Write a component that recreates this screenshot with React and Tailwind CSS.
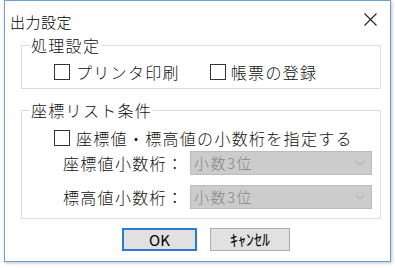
const FONT = { fontFamily: '"Noto Sans CJK JP", "Noto Sans", sans-serif' };

function CheckBox() {
  return <div className="w-[16px] h-[16px] border border-[#333333] bg-white shrink-0" />;
}

function Chevron() {
  return (
    <svg width="10" height="6" viewBox="0 0 10 6" className="shrink-0">
      <path d="M0.5 0.5 L5 5 L9.5 0.5" fill="none" stroke="#a9a9a9" strokeWidth="1" />
    </svg>
  );
}

function DigitSelect() {
  return (
    <div className="w-[182px] h-[24px] bg-[#cccccc] border border-[#bdbdbd] flex items-center justify-between pl-[3px] pr-[6px]">
      <span className="text-[15px] leading-[20px] tracking-[1.5px] font-light text-[#858585]">小数3位</span>
      <Chevron />
    </div>
  );
}

function Group({ label, className, children }) {
  return (
    <div className={`relative ml-[16px] w-[360px] border border-[#dcdcdc] ${className}`}>
      <span className="absolute left-[8px] top-[-11px] bg-white px-[1px] text-[16px] leading-[20px] tracking-[1.3px] font-light text-[#111111]">
        {label}
      </span>
      {children}
    </div>
  );
}

export default function App() {
  return (
    <div className="w-[395px] h-[268px] bg-white pl-[4px]" style={FONT}>
      <div className="w-[387px] h-[262px] border border-[#6d9fd3] bg-white flex flex-col shadow-[1px_1px_3px_rgba(0,0,0,0.25)]">
        {/* title bar */}
        <div className="h-[34px] flex items-start justify-between pt-[11px] pl-[5px] pr-[13px]">
          <span className="text-[15px] leading-[20px] tracking-[0.5px] font-light text-black">出力設定</span>
          <svg width="13" height="13" viewBox="0 0 13 13" className="mt-[1px]">
            <path d="M0.5 0.5 L12.5 12.5 M12.5 0.5 L0.5 12.5" stroke="#222222" strokeWidth="1.1" />
          </svg>
        </div>

        <Group label="処理設定" className="mt-[10px] h-[44px]">
          <div className="h-full flex items-center pt-[10px] pl-[32px] text-[16px] leading-[20px] tracking-[1.3px] font-light text-[#111111]">
            <CheckBox />
            <span className="ml-[6px]">プリンタ印刷</span>
            <div className="ml-[30px] flex items-center">
              <CheckBox />
              <span className="ml-[5px]">帳票の登録</span>
            </div>
          </div>
        </Group>

        <Group label="座標リスト条件" className="mt-[21px] h-[109px]">
          <div className="flex flex-col pt-[19px] text-[16px] leading-[20px] tracking-[1.3px] font-light text-[#111111]">
            <div className="h-[15px] flex items-center pl-[32px]">
              <CheckBox />
              <span className="ml-[6px]">座標値・標高値の小数桁を指定する</span>
            </div>
            <div className="mt-[6px] flex items-center pl-[41px]">
              <span className="w-[127px]">座標値小数桁：</span>
              <DigitSelect />
            </div>
            <div className="mt-[10px] flex items-center pl-[41px]">
              <span className="w-[127px]">標高値小数桁：</span>
              <DigitSelect />
            </div>
          </div>
        </Group>

        <div className="mt-[9px] flex pl-[117px]">
          <button className="w-[75px] h-[23px] border-2 border-[#2b7ad2] bg-[#e1e1e1] text-[15px] leading-[19px] text-black">
            OK
          </button>
          <button className="ml-[13px] w-[80px] h-[23px] border border-[#adadad] bg-[#e1e1e1] text-[16px] leading-[21px] text-black">
            ｷｬﾝｾﾙ
          </button>
        </div>
      </div>
    </div>
  );
}
